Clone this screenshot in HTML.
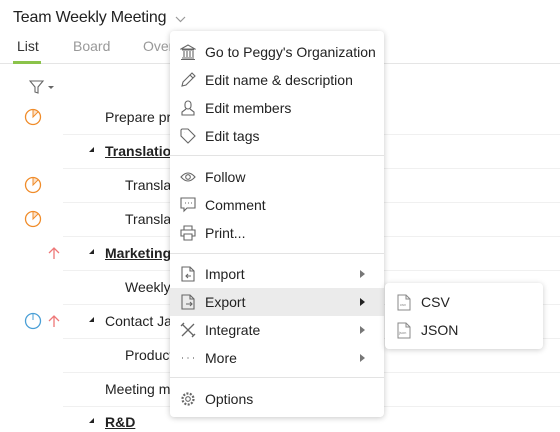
<!DOCTYPE html>
<html><head><style>
body{margin:0;width:560px;height:432px;overflow:hidden;background:#fff;font-family:"Liberation Sans",sans-serif;color:#222;position:relative}
.a{position:absolute;white-space:nowrap}
.t{font-size:14px;line-height:16px}
.line{position:absolute;left:63px;right:0;height:1px;background:#f0f0f0}
.menu{position:absolute;left:170px;top:31px;width:214px;height:386px;background:#fff;border-radius:4px;box-shadow:0 1px 6px rgba(0,0,0,.22)}
.mi{position:absolute;left:0;right:0;height:28px;font-size:14px;line-height:28px;color:#222}
.mi span{position:absolute;left:35px}
.mi svg{position:absolute;left:10px;top:6px}
.sep{position:absolute;left:0;right:0;height:1px;background:#e3e3e3}
.arr{position:absolute;left:190px;top:10px;width:0;height:0;border-left:5px solid #777;border-top:4px solid transparent;border-bottom:4px solid transparent}
.tri{position:absolute;width:0;height:0;border-left:5px solid transparent;border-bottom:5px solid #222}
.u{text-decoration:underline;font-weight:bold}
</style></head><body>
<div class="a" style="left:13px;top:9px;font-size:16px;letter-spacing:-0.2px">Team Weekly Meeting</div>
<svg class="a" style="left:175px;top:16px" width="11" height="7"><path d="M1 1l4.5 4.5L10 1" fill="none" stroke="#999" stroke-width="1.2"/></svg>
<div class="a t" style="left:17px;top:38px;color:#333">List</div>
<div class="a t" style="left:73px;top:38px;color:#999">Board</div>
<div class="a t" style="left:143px;top:38px;color:#999">Overview</div>
<div class="a" style="left:0;right:0;top:63px;height:1px;background:#e5e5e5"></div>
<div class="a" style="left:13px;top:61px;width:28px;height:3px;background:#8bc34a"></div>
<svg class="a" style="left:29px;top:80px" width="26" height="15"><path d="M1 1h13l-5 6v6l-3-1V7z" fill="none" stroke="#666" stroke-width="1.1"/><path d="M19 6h6l-3 3z" fill="#666"/></svg>

<svg class="a" style="left:24px;top:108px" width="18" height="18"><circle cx="9" cy="9" r="7.5" fill="none" stroke="#f08c2a" stroke-width="1.3"/><path d="M9 1.5V9L14.3 3.7A7.5 7.5 0 0 0 9 1.5z" fill="#f08c2a" opacity=".25"/><path d="M9 1.5V9l5.3-5.3" fill="none" stroke="#f08c2a" stroke-width="1"/></svg>
<svg class="a" style="left:24px;top:176px" width="18" height="18"><circle cx="9" cy="9" r="7.5" fill="none" stroke="#f08c2a" stroke-width="1.3"/><path d="M9 1.5V9L14.3 3.7A7.5 7.5 0 0 0 9 1.5z" fill="#f08c2a" opacity=".25"/><path d="M9 1.5V9l5.3-5.3" fill="none" stroke="#f08c2a" stroke-width="1"/></svg>
<svg class="a" style="left:24px;top:210px" width="18" height="18"><circle cx="9" cy="9" r="7.5" fill="none" stroke="#f08c2a" stroke-width="1.3"/><path d="M9 1.5V9L14.3 3.7A7.5 7.5 0 0 0 9 1.5z" fill="#f08c2a" opacity=".25"/><path d="M9 1.5V9l5.3-5.3" fill="none" stroke="#f08c2a" stroke-width="1"/></svg>
<svg class="a" style="left:24px;top:312px" width="18" height="18"><circle cx="9" cy="9" r="7.5" fill="none" stroke="#4a9fd6" stroke-width="1.3"/><path d="M9 2v6" stroke="#4a9fd6"/></svg>
<svg class="a" style="left:47px;top:246px" width="14" height="14"><path d="M7 13V2M2 7l5-5 5 5" fill="none" stroke="#e77" stroke-width="1.3"/></svg>
<svg class="a" style="left:47px;top:314px" width="14" height="14"><path d="M7 13V2M2 7l5-5 5 5" fill="none" stroke="#e77" stroke-width="1.3"/></svg>

<div class="a t" style="left:105px;top:109px">Prepare presentation</div>
<div class="line" style="top:134px"></div>
<div class="tri" style="left:89px;top:147px"></div><div class="a t u" style="left:105px;top:143px">Translations</div>
<div class="line" style="top:168px"></div>
<div class="a t" style="left:125px;top:177px">Translate</div>
<div class="line" style="top:202px"></div>
<div class="a t" style="left:125px;top:211px">Translate</div>
<div class="line" style="top:236px"></div>
<div class="tri" style="left:89px;top:249px"></div><div class="a t u" style="left:105px;top:245px">Marketing</div>
<div class="line" style="top:270px"></div>
<div class="a t" style="left:125px;top:279px">Weekly</div>
<div class="line" style="top:304px"></div>
<div class="tri" style="left:89px;top:317px"></div><div class="a t" style="left:105px;top:313px">Contact James</div>
<div class="line" style="top:338px"></div>
<div class="a t" style="left:125px;top:347px">Product</div>
<div class="line" style="top:372px"></div>
<div class="a t" style="left:105px;top:381px">Meeting minutes</div>
<div class="line" style="top:406px"></div>
<div class="tri" style="left:89px;top:418px"></div><div class="a t u" style="left:105px;top:414px">R&amp;D</div>

<div class="menu">
<div class="mi" style="top:7px"><svg width="16" height="16"><path d="M1 5L8 1l7 4zM2 6h12M2 14h12M1 15.5h14M4 7v6M7 7v6M10 7v6M13 7v6" fill="none" stroke="#666" stroke-width="1.1"/></svg><span>Go to Peggy's Organization</span></div>
<div class="mi" style="top:35px"><svg width="16" height="16"><path d="M2 14l1-4 9-9 3 3-9 9zM10 3l3 3" fill="none" stroke="#666" stroke-width="1.1"/></svg><span>Edit name &amp; description</span></div>
<div class="mi" style="top:63px"><svg width="16" height="16"><path d="M8 1a3 3 0 0 1 3 3v2a3 3 0 0 1-6 0V4a3 3 0 0 1 3-3zM6 9l-4 3v3h12v-3l-4-3" fill="none" stroke="#666" stroke-width="1.1"/></svg><span>Edit members</span></div>
<div class="mi" style="top:91px"><svg width="16" height="16"><path d="M1 2v6l7 7 7-7-7-7H2zM4.5 4.5h.1" fill="none" stroke="#666" stroke-width="1.1"/></svg><span>Edit tags</span></div>
<div class="sep" style="top:124px"></div>
<div class="mi" style="top:132px"><svg width="16" height="16"><path d="M1 8q7-8 14 0-7 8-14 0z" fill="none" stroke="#666" stroke-width="1.1"/><circle cx="8" cy="8" r="2.3" fill="none" stroke="#666" stroke-width="1.1"/></svg><span>Follow</span></div>
<div class="mi" style="top:160px"><svg width="16" height="16"><path d="M1 1h14v10H7l-3 3v-3H1z" fill="none" stroke="#666" stroke-width="1.1"/><path d="M5 6h1M8 6h1M11 6h1" stroke="#666"/></svg><span>Comment</span></div>
<div class="mi" style="top:188px"><svg width="16" height="16"><path d="M4 5V1h8v4M4 11H1V5h14v6h-3M4 9h8v6H4z" fill="none" stroke="#666" stroke-width="1.1"/></svg><span>Print...</span></div>
<div class="sep" style="top:222px"></div>
<div class="mi" style="top:229px"><svg width="16" height="16"><path d="M2 1h8l4 4v10H2zM10 1v4h4M11 10H6M8 8l-2 2 2 2" fill="none" stroke="#666" stroke-width="1.1"/></svg><span>Import</span><div class="arr"></div></div>
<div class="mi" style="top:257px;background:#ebebeb"><svg width="16" height="16"><path d="M2 1h8l4 4v10H2zM10 1v4h4M6 10h6M10 8l2 2-2 2" fill="none" stroke="#666" stroke-width="1.1"/></svg><span>Export</span><div class="arr" style="border-left-color:#222"></div></div>
<div class="mi" style="top:285px"><svg width="16" height="16"><path d="M2 14L14 2M2 2l12 12M1 4l3-3M12 15l3-3" fill="none" stroke="#666" stroke-width="1.3"/></svg><span>Integrate</span><div class="arr"></div></div>
<div class="mi" style="top:313px"><svg width="16" height="16"><path d="M2 8h1M7.5 8h1M13 8h1" stroke="#666" stroke-width="1.2"/></svg><span>More</span><div class="arr"></div></div>
<div class="sep" style="top:346px"></div>
<div class="mi" style="top:354px"><svg width="16" height="16"><circle cx="8" cy="8" r="2.3" fill="none" stroke="#666" stroke-width="1.1"/><circle cx="8" cy="8" r="5.5" fill="none" stroke="#666" stroke-width="2.2" stroke-dasharray="2 1.45"/></svg><span>Options</span></div>
</div>

<div class="a" style="left:385px;top:283px;width:158px;height:66px;background:#fff;border-radius:4px;box-shadow:0 1px 6px rgba(0,0,0,.2)">
<svg class="a" style="left:12px;top:11px" width="14" height="17"><path d="M1 1h8l4 4v11H1zM9 1v4h4" fill="none" stroke="#888"/><text x="3" y="12" font-size="4" fill="#888" font-family="Liberation Sans">csv</text></svg>
<div class="a t" style="left:36px;top:11px">CSV</div>
<svg class="a" style="left:12px;top:39px" width="14" height="17"><path d="M1 1h8l4 4v11H1zM9 1v4h4" fill="none" stroke="#888"/><text x="2" y="12" font-size="4" fill="#888" font-family="Liberation Sans">json</text></svg>
<div class="a t" style="left:36px;top:39px">JSON</div>
</div>
</body></html>
